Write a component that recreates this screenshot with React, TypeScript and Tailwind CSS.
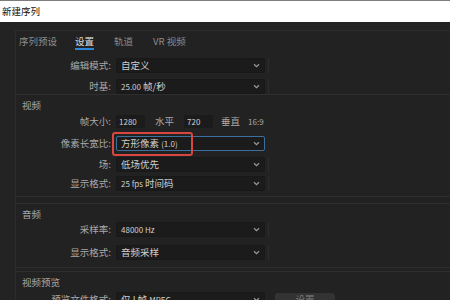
import React from 'react';

const FONT = { fontFamily: '"Noto Sans CJK SC", "Noto Sans", sans-serif' };

const Chevron: React.FC = () => (
  <svg width="7" height="5" viewBox="0 0 7 5" className="shrink-0">
    <path d="M1 1.2 L3.5 3.6 L6 1.2" fill="none" stroke="#9a9a9a" strokeWidth="1.2" />
  </svg>
);

interface SelectProps {
  value: React.ReactNode;
  active?: boolean;
}

const Select: React.FC<SelectProps> = ({ value, active }) => (
  <div
    className={`flex h-[15px] w-[149px] items-center justify-between rounded-[2px] border bg-[#1b1b1b] pl-[4px] pr-[4px] text-[9.5px] text-[#cfcfcf] ${
      active ? 'border-[#3a6f9e]' : 'border-[#181818]'
    }`}
  >
    <span className="leading-none whitespace-nowrap">{value}</span>
    <Chevron />
  </div>
);

const Divider: React.FC = () => <div className="ml-[3px] h-[15px] w-px bg-[#2c2c2c]" />;

const Row: React.FC<{ label: string; children: React.ReactNode; className?: string }> = ({
  label,
  children,
  className = '',
}) => (
  <div className={`flex h-[15px] items-center ${className}`}>
    <div className="w-[95px] shrink-0 text-right text-[9.5px] leading-none text-[#a9a9a9]">{label}</div>
    <div className="ml-[5px] flex items-center">{children}</div>
  </div>
);

const Section: React.FC<{ title: string; children: React.ReactNode; className?: string }> = ({
  title,
  children,
  className = '',
}) => (
  <div className={`border-t border-b border-[#2e2e2e] ${className}`}>
    <div className="pl-[6px] pt-[4px] text-[9.5px] leading-[12px] text-[#a9a9a9]">{title}</div>
    {children}
  </div>
);

const App: React.FC = () => {
  return (
    <div className="h-[300px] w-[450px] overflow-hidden bg-[#232323]" style={FONT}>
      <div className="flex h-[22px] items-center border-t border-[#7d7d7d] bg-white pl-[2px] text-[9.5px] text-[#111]">
        新建序列
      </div>

      <div className="ml-[15px] mt-[8px] border-l border-t border-[#2c2c2c] bg-[#222222]">
        <div className="flex h-[19px] items-end pl-[3px] text-[9.5px] leading-none">
          <span className="pb-[4px] text-[#8c8c8c]">序列预设</span>
          <span className="ml-[18px] border-b-2 border-[#2f86d6] pb-[2px] text-[#dcdcdc]">设置</span>
          <span className="ml-[20px] pb-[4px] text-[#8c8c8c]">轨道</span>
          <span className="ml-[20px] pb-[4px] text-[#8c8c8c]">VR 视频</span>
        </div>

        <Row label="编辑模式:" className="mt-[8px]">
          <Select value="自定义" />
          <Divider />
        </Row>
        <Row label="时基:" className="mt-[6px]">
          <Select
            value={
              <>
                <span className="text-[8px]">25.00</span> 帧/秒
              </>
            }
          />
          <Divider />
        </Row>

        <Section title="视频" className="mt-0 pb-[5px]">
          <Row label="帧大小:" className="mt-[3px]">
            <div className="flex h-[13px] w-[29px] items-center bg-[#1b1b1b] pl-[3px] text-[8px] text-[#cfcfcf]">1280</div>
            <span className="ml-[10px] text-[9.5px] text-[#a9a9a9]">水平</span>
            <div className="ml-[10px] flex h-[13px] w-[29px] items-center bg-[#1b1b1b] pl-[3px] text-[8px] text-[#cfcfcf]">720</div>
            <span className="ml-[8px] text-[9.5px] text-[#a9a9a9]">垂直</span>
            <span className="ml-[8px] text-[8px] text-[#a9a9a9]">16:9</span>
          </Row>
          <Row label="像素长宽比:" className="mt-[7px]">
            <div className="relative">
              <Select
                active
                value={
                  <>
                    方形像素 <span className="text-[8px]">(1.0)</span>
                  </>
                }
              />
              <div className="absolute -left-[4px] -top-[4px] h-[24px] w-[81px] rounded-[3px] border-2 border-[#d9453f]" />
            </div>
          </Row>
          <Row label="场:" className="mt-[6px]">
            <Select value="低场优先" />
            <Divider />
          </Row>
          <Row label="显示格式:" className="mt-[4px]">
            <Select
              value={
                <>
                  <span className="text-[8px]">25 fps</span> 时间码
                </>
              }
            />
            <Divider />
          </Row>
        </Section>

        <Section title="音频" className="mt-[6px] pb-[7px]">
          <Row label="采样率:" className="mt-[2px]">
            <Select value={<span className="text-[8px]">48000 Hz</span>} />
            <Divider />
          </Row>
          <Row label="显示格式:" className="mt-[8px]">
            <Select value="音频采样" />
            <Divider />
          </Row>
        </Section>

        <Section title="视频预览" className="mt-[3px]">
          <Row label="预览文件格式:" className="mt-[4px]">
            <Select
              value={
                <>
                  仅 I 帧 <span className="text-[8px]">MPEG</span>
                </>
              }
            />
            <div className="ml-[10px] flex h-[14px] w-[60px] items-center justify-center rounded-[3px] bg-[#333333] text-[9.5px] text-[#7a7a7a]">
              设置
            </div>
          </Row>
        </Section>
      </div>
    </div>
  );
};

export default App;
